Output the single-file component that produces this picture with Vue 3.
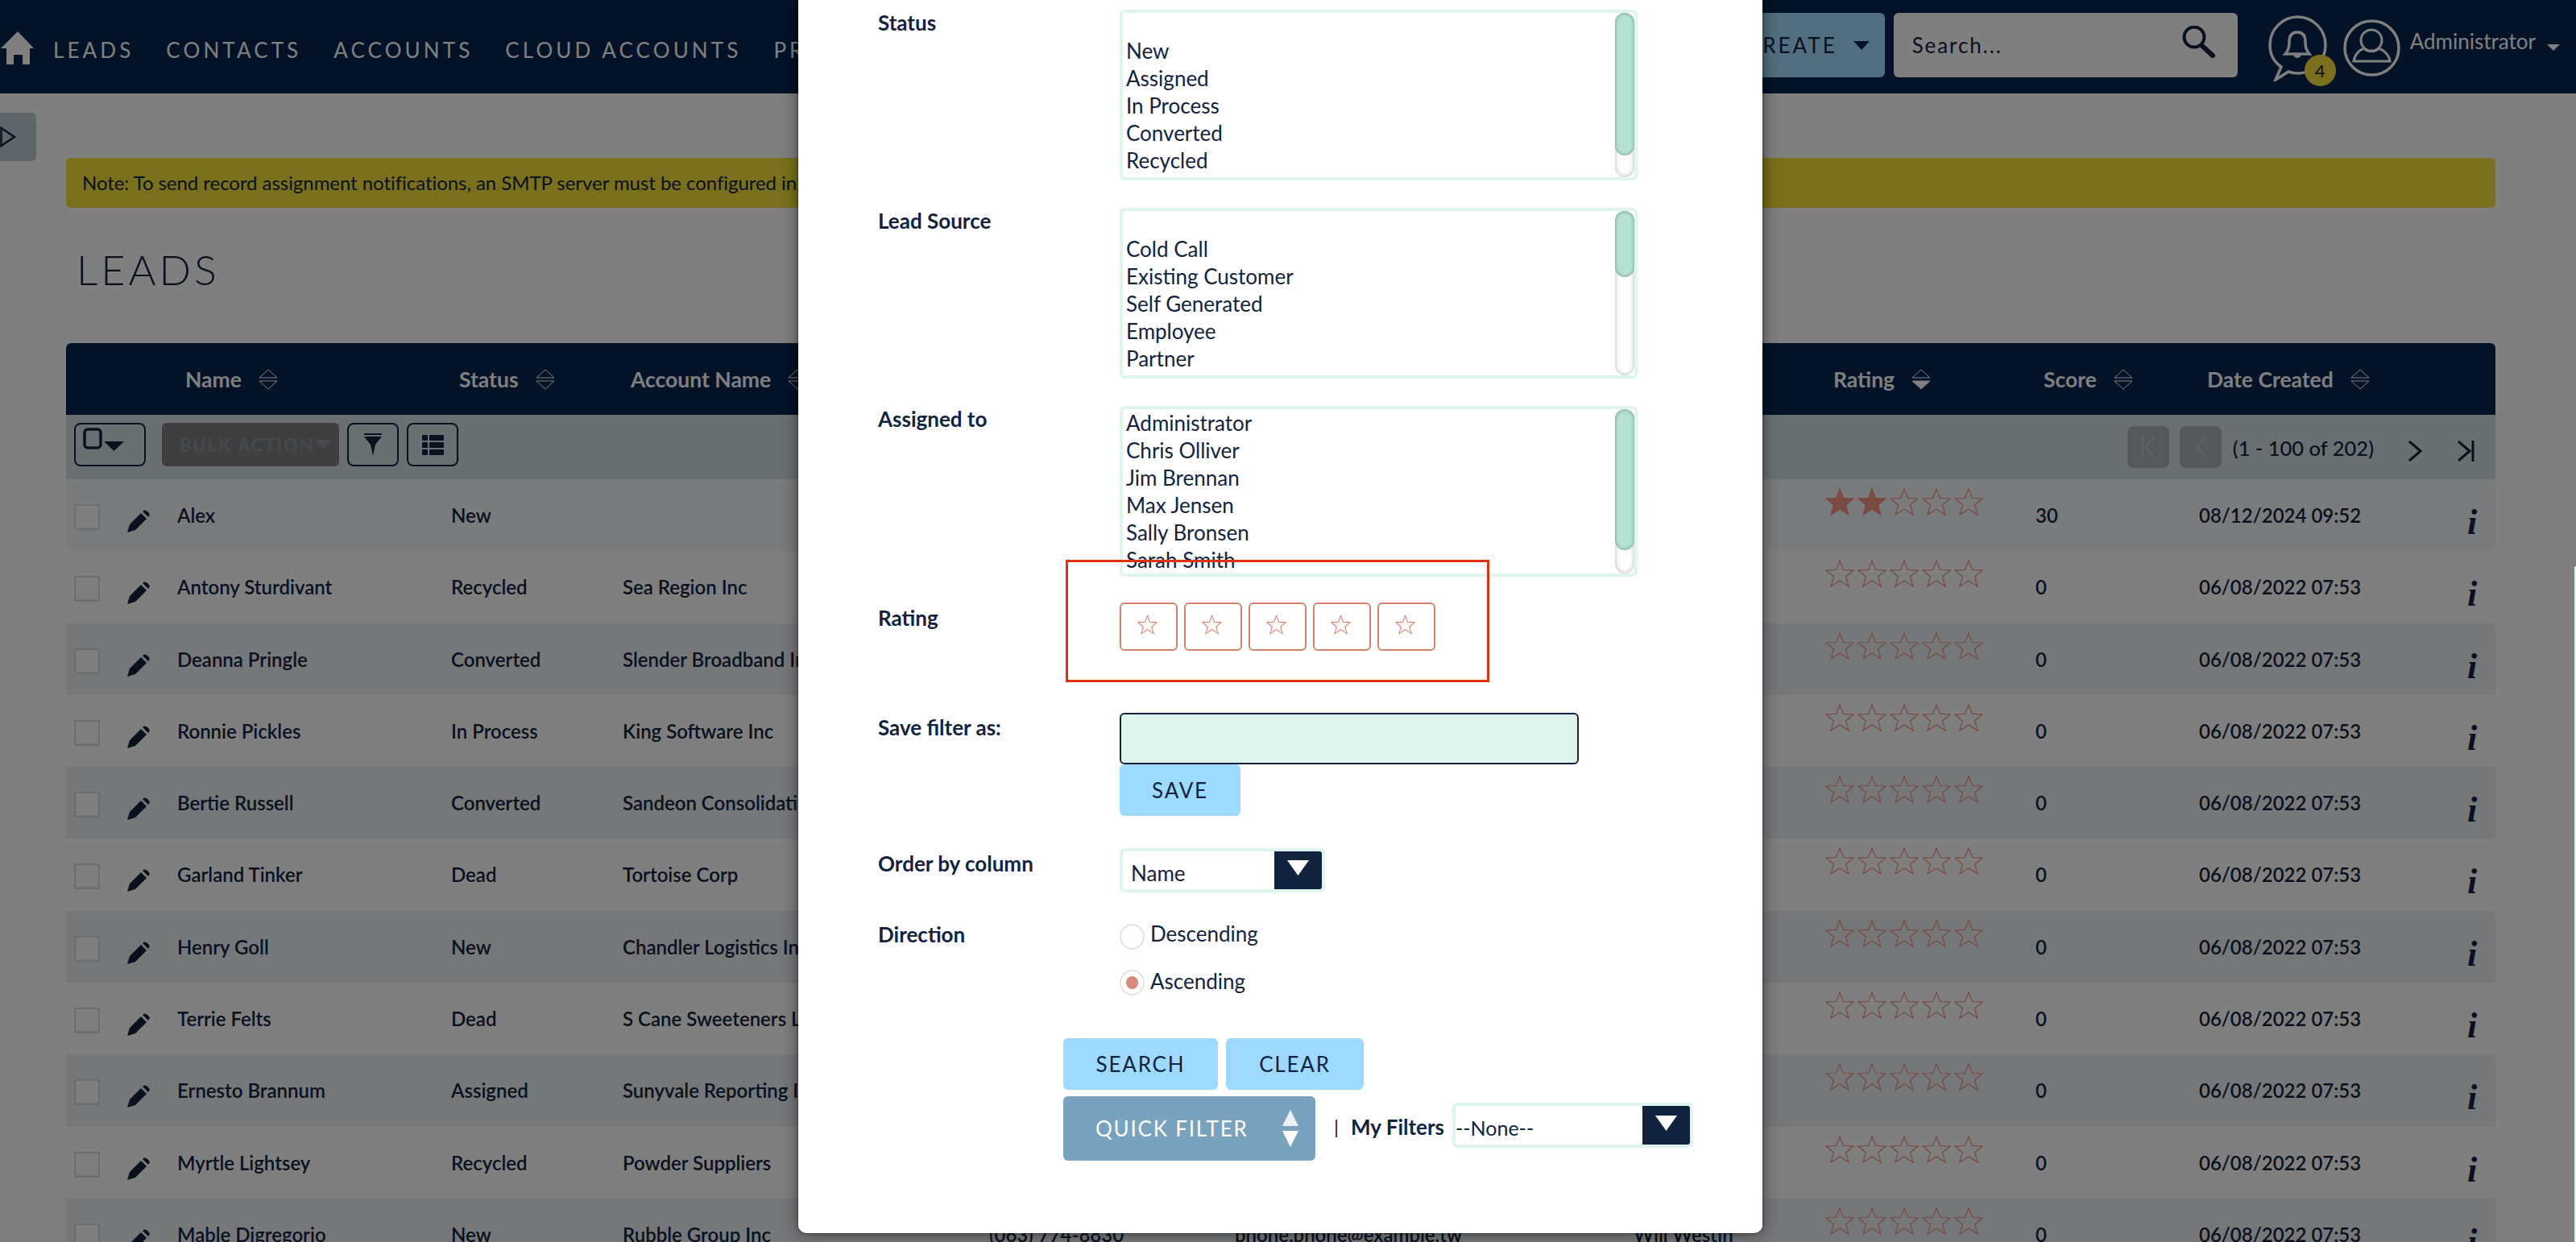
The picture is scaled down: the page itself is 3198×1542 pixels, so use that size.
<template>
  <div class="page">
    <header class="topnav">
      <svg class="home" viewBox="0 0 41 41"><path d="M21 0 L41 21 L36 21 L36 41 L27 41 L27 29 L16 29 L16 41 L7 41 L7 21 L0 21 Z" fill="#fff"/></svg>
      <nav class="menu">
        <a v-for="item in menuItems" :key="item">{{ item }}</a>
      </nav>
      <div class="nav-right">
        <button class="create">CREATE<svg width="20" height="11" viewBox="0 0 20 11"><path d="M0 0H20L10 11Z" fill="#06244e"/></svg></button>
        <div class="global-search">
          <span class="search-hint">Search...</span>
          <svg class="search-icon" width="42" height="40" viewBox="0 0 42 40" fill="none" stroke="#12233f"><circle cx="15" cy="14" r="12.500" stroke-width="4"/><path d="M25 25L38 37" stroke-width="6" stroke-linecap="round"/></svg>
        </div>
        <div class="bell">
          <svg width="74" height="82" viewBox="0 0 74 82" fill="none" stroke="#fff" stroke-width="3.500">
            <path d="M16 64C6 57 2 47 2 37C2 18 17 2 36.500 2C56 2 71 18 71 37C71 56 56 72 36.500 72C32 72 28 71 25 70L9 80Z"/>
            <path d="M36 21C29 21 26 26 26 33C26 40 25 43 21 48L51 48C47 43 46 40 46 33C46 26 43 21 36 21Z"/>
            <path d="M31 48h10a5 5 0 0 1-10 0Z" fill="#fff" stroke="none"/>
          </svg>
          <span class="badge">4</span>
        </div>
        <svg class="avatar" width="71" height="71" viewBox="0 0 71 71" fill="none" stroke="#fff" stroke-width="3">
          <circle cx="35.500" cy="35.500" r="33.500" stroke-width="3.500"/>
          <circle cx="35" cy="26" r="13"/>
          <path d="M13 52L58 52C57 44 50 38 44 36C40 41 30 41 26 36C20 38 14 44 13 52Z"/>
        </svg>
        <span class="user-name">Administrator</span>
        <svg class="user-caret" width="16" height="8" viewBox="0 0 16 8"><path d="M0 0H16L8 8Z" fill="#fff"/></svg>
      </div>
    </header>

    <main class="content">
      <div class="side-toggle">
        <svg width="20" height="26" viewBox="0 0 20 26" fill="none" stroke="#12233f" stroke-width="2.500"><path d="M1.500 2L18 13L1.500 24Z"/></svg>
      </div>
      <div class="alert">Note: To send record assignment notifications, an SMTP server must be configured in Email Settings.</div>
      <h1 class="title">LEADS</h1>

      <section class="list">
        <div class="list-head">
          <div v-for="(col, i) in columns" :key="i" class="head-cell">
            <template v-if="col.name">
              <span>{{ col.name }}</span>
              <svg width="24" height="26" viewBox="0 0 24 26" fill="none" stroke="#fff" stroke-width="1">
                <path d="M12 1L23 11H1Z"/>
                <path d="M1 15H23L12 25Z" :fill="col.sorted ? '#fff' : 'none'"/>
              </svg>
            </template>
          </div>
        </div>

        <div class="toolbar">
          <button class="tool-btn select-btn">
            <svg width="52" height="30" viewBox="0 0 52 30"><rect x="2" y="2" width="20" height="23" rx="4" fill="none" stroke="#12233f" stroke-width="3.500"/><path d="M26 17H51L38.500 29Z" fill="#12233f"/></svg>
          </button>
          <button class="bulk">BULK ACTION<svg width="20" height="12" viewBox="0 0 20 12"><path d="M0 0H20L10 12Z" fill="#8a94a2"/></svg></button>
          <button class="tool-btn icon-btn">
            <svg width="22" height="28" viewBox="0 0 22 28"><path d="M0 0H22V2H0ZM0 4H22L14 14L11 28L8 14Z" fill="#12233f"/></svg>
          </button>
          <button class="tool-btn icon-btn">
            <svg width="27" height="25" viewBox="0 0 27 25" fill="#12233f"><rect width="7" height="7" rx="1"/><rect x="9" width="18" height="7" rx="1"/><rect y="9" width="7" height="7" rx="1"/><rect x="9" y="9" width="18" height="7" rx="1"/><rect y="18" width="7" height="7" rx="1"/><rect x="9" y="18" width="18" height="7" rx="1"/></svg>
          </button>
          <div class="pager">
            <button class="page-btn">
              <svg width="20" height="28" viewBox="0 0 20 28" fill="none" stroke="#bcc4ce" stroke-width="2.500"><path d="M3 1V27M18 1L7 14L18 27"/></svg>
            </button>
            <button class="page-btn">
              <svg width="14" height="28" viewBox="0 0 14 28" fill="none" stroke="#bcc4ce" stroke-width="2.500"><path d="M13 1L2 14L13 27"/></svg>
            </button>
            <span class="page-count">(1 - 100 of 202)</span>
            <svg class="next" width="18" height="26" viewBox="0 0 18 26" fill="none" stroke="#12233f" stroke-width="3"><path d="M2 1L16 13L2 25"/></svg>
            <svg class="last" width="21" height="26" viewBox="0 0 21 26" fill="none" stroke="#12233f" stroke-width="3"><path d="M1 1L15 13L1 25M19 0V26"/></svg>
          </div>
        </div>

        <div v-for="(row, i) in rows" :key="row.name" class="row" :class="{ shaded: i % 2 === 0, active: i === 0 }">
          <span class="check"></span>
          <svg class="pencil" width="29" height="28" viewBox="0 0 29 28" fill="#12233f"><path d="M0 28L3 18L17 4L24 11L10 25ZM19 2L21 .5Q23 0 25 2L27 4Q28.500 6 27 7.500L26 9Z"/></svg>
          <span class="cell">{{ row.name }}</span>
          <span class="cell">{{ row.status }}</span>
          <span class="cell">{{ row.account }}</span>
          <span class="cell">{{ row.phone }}</span>
          <span class="cell">{{ row.email }}</span>
          <span class="cell">{{ row.user }}</span>
          <span class="stars">
            <svg v-for="n in 5" :key="n" width="36" height="34" viewBox="0 0 36 34">
              <path d="M18 1L22.500 12.500L35 13L25.500 21L29 33L18 26L7 33L10.500 21L1 13L13.500 12.500Z" :fill="n <= row.stars ? '#f69480' : 'none'" stroke="#f09080" stroke-width="1.200"/>
            </svg>
          </span>
          <span class="cell">{{ row.score }}</span>
          <span class="cell">{{ row.created }}</span>
          <span class="info">i</span>
        </div>
      </section>
    </main>

    <div class="backdrop"></div>
    <div class="edge-strip"></div>

    <div class="modal">
      <div v-for="box in listBoxes" :key="box.label" class="field list-field">
        <label class="field-label">{{ box.label }}</label>
        <div class="listbox">
          <div class="options">
            <div v-if="box.blank" class="blank"></div>
            <div v-for="opt in box.options" :key="opt" class="option">{{ opt }}</div>
          </div>
          <div class="scroll"><div class="thumb" :style="{ height: box.thumb + 'px' }"></div></div>
        </div>
      </div>

      <div class="field rating-field">
        <label class="field-label">Rating</label>
        <div class="rate-btns">
          <button v-for="n in 5" :key="n" class="rate-btn">
            <svg width="25" height="25" viewBox="0 0 36 34"><path d="M18 1L22.500 12.500L35 13L25.500 21L29 33L18 26L7 33L10.500 21L1 13L13.500 12.500Z" fill="none" stroke="#dd8477" stroke-width="1.600"/></svg>
          </button>
        </div>
        <div class="highlight"></div>
      </div>

      <div class="field save-field">
        <label class="field-label">Save filter as:</label>
        <div>
          <input class="save-input" type="text">
          <button class="blue-btn save-btn">SAVE</button>
        </div>
      </div>

      <div class="field order-field">
        <label class="field-label">Order by column</label>
        <div class="dropdown order-select">
          <span class="dropdown-text">Name</span>
          <span class="dropdown-arrow"><svg width="27" height="19" viewBox="0 0 27 19"><path d="M0 0H27L13.500 19Z" fill="#fff"/></svg></span>
        </div>
      </div>

      <div class="field direction-field">
        <label class="field-label">Direction</label>
        <div class="radios">
          <div class="radio-line"><span class="radio"></span>Descending</div>
          <div class="radio-line"><span class="radio on"></span>Ascending</div>
        </div>
      </div>

      <div class="actions">
        <button class="blue-btn search-btn">SEARCH</button>
        <button class="blue-btn clear-btn">CLEAR</button>
      </div>
      <div class="actions-second">
        <button class="quick">
          <span>QUICK FILTER</span>
          <svg width="20" height="46" viewBox="0 0 20 46" fill="#fff"><path d="M10 0L20 20H0Z" opacity=".85"/><path d="M0 26H20L10 46Z"/></svg>
        </button>
        <span class="sep">|</span>
        <span class="my-filters">My Filters</span>
        <div class="dropdown filter-select">
          <span class="dropdown-text none">--None--</span>
          <span class="dropdown-arrow"><svg width="27" height="19" viewBox="0 0 27 19"><path d="M0 0H27L13.500 19Z" fill="#fff"/></svg></span>
        </div>
      </div>
    </div>
  </div>
</template>

<script setup>
const menuItems = ['LEADS', 'CONTACTS', 'ACCOUNTS', 'CLOUD ACCOUNTS', 'PROJECTS']

const columns = [
  { name: '' }, { name: '' },
  { name: 'Name' },
  { name: 'Status' },
  { name: 'Account Name' },
  { name: '' }, { name: '' }, { name: '' },
  { name: 'Rating', sorted: true },
  { name: 'Score' },
  { name: 'Date Created' },
  { name: '' }
]

const old = { stars: 0, score: '0', created: '06/08/2022 07:53' }

const rows = [
  { name: 'Alex', status: 'New', account: '', stars: 2, score: '30', created: '08/12/2024 09:52' },
  { name: 'Antony Sturdivant', status: 'Recycled', account: 'Sea Region Inc', ...old },
  { name: 'Deanna Pringle', status: 'Converted', account: 'Slender Broadband Inc', ...old },
  { name: 'Ronnie Pickles', status: 'In Process', account: 'King Software Inc', ...old },
  { name: 'Bertie Russell', status: 'Converted', account: 'Sandeon Consolidation Corp', ...old },
  { name: 'Garland Tinker', status: 'Dead', account: 'Tortoise Corp', ...old },
  { name: 'Henry Goll', status: 'New', account: 'Chandler Logistics Inc', ...old },
  { name: 'Terrie Felts', status: 'Dead', account: 'S Cane Sweeteners Ltd', ...old },
  { name: 'Ernesto Brannum', status: 'Assigned', account: 'Sunyvale Reporting Inc', ...old },
  { name: 'Myrtle Lightsey', status: 'Recycled', account: 'Powder Suppliers', ...old },
  { name: 'Mable Digregorio', status: 'New', account: 'Rubble Group Inc', phone: '(063) 774-8830', email: 'phone.phone@example.tw', user: 'Will Westin', ...old }
]

const listBoxes = [
  { label: 'Status', blank: true, thumb: 177, options: ['New', 'Assigned', 'In Process', 'Converted', 'Recycled'] },
  { label: 'Lead Source', blank: true, thumb: 82, options: ['Cold Call', 'Existing Customer', 'Self Generated', 'Employee', 'Partner'] },
  { label: 'Assigned to', blank: false, thumb: 175, options: ['Administrator', 'Chris Olliver', 'Jim Brennan', 'Max Jensen', 'Sally Bronsen', 'Sarah Smith'] }
]
</script>

<style>
html, body {
  margin: 0;
  background: #fff;
}
</style>

<style scoped>
.page {
  position: relative;
  width: 3198px;
  height: 1542px;
  overflow: hidden;
  background: #fff;
  color: #12233f;
  font-family: Lato, "Liberation Sans", sans-serif;
  font-size: 24px;
}

button {
  font-family: inherit;
  border: none;
  padding: 0;
}

.topnav {
  display: flex;
  align-items: center;
  height: 116px;
  background: #06244e;
  color: #fff;
}

.home {
  width: 41px;
  height: 41px;
  margin-left: 1px;
  margin-top: 3px;
}

.menu {
  display: flex;
  gap: 40px;
  margin-left: 24px;
  font-size: 26px;
  letter-spacing: 4.1px;
  white-space: nowrap;
  margin-top: 8px;
}

.nav-right {
  display: flex;
  align-items: center;
  margin-left: auto;
  padding-right: 20px;
}

.create {
  display: flex;
  align-items: center;
  justify-content: flex-end;
  gap: 20px;
  width: 210px;
  height: 80px;
  padding-right: 19px;
  margin-top: -4px;
  background: #a4dfff;
  color: #12233f;
  font-size: 26px;
  letter-spacing: 3px;
  border-radius: 6px;
}

.global-search {
  display: flex;
  align-items: center;
  justify-content: space-between;
  width: 427px;
  height: 80px;
  margin-left: 11px;
  margin-top: -4px;
  padding: 0 27px 0 23px;
  box-sizing: border-box;
  background: #fff;
  border-radius: 6px;
  color: #12233f;
  font-size: 26px;
  letter-spacing: 1.9px;
}

.search-icon {
  margin-top: -9px;
}

.bell {
  position: relative;
  width: 84px;
  height: 89px;
  margin-left: 38px;
  margin-top: 11px;
}

.badge {
  position: absolute;
  left: 45px;
  top: 49px;
  width: 39px;
  height: 39px;
  border-radius: 50%;
  background: #f4de38;
  color: #12233f;
  font-size: 22px;
  line-height: 39px;
  text-align: center;
}

.avatar {
  margin-left: 9px;
  margin-top: 2px;
}

.user-name {
  margin-left: 12px;
  margin-top: -14px;
  font-size: 26px;
}

.user-caret {
  margin-left: 14px;
  margin-top: 2px;
}

.content {
  padding: 0 100px 0 82px;
}

.side-toggle {
  display: flex;
  align-items: center;
  justify-content: flex-start;
  width: 45px;
  height: 60px;
  margin: 24px 0 -4px -82px;
  background: #bfccd2;
  border-radius: 0 6px 6px 0;
}

.alert {
  height: 62px;
  padding-left: 20px;
  line-height: 62px;
  background: #f4de38;
  border-radius: 6px;
  white-space: nowrap;
  overflow: hidden;
  font-size: 24px;
  letter-spacing: -0.05px;
}

.title {
  height: 60px;
  margin: 46px 0 62px 13px;
  font-size: 52px;
  font-weight: 300;
  line-height: 60px;
  letter-spacing: 4px;
}

.list-head,
.row {
  display: grid;
  grid-template-columns: 67px 61px 340px 213px 455px 305px 495px 238px 261px 203px 333px 45px;
}

.list-head {
  height: 89px;
  align-items: center;
  background: #06244e;
  color: #fff;
  border-radius: 6px 6px 0 0;
  font-size: 26.5px;
  font-weight: 700;
}

.head-cell {
  display: flex;
  align-items: center;
  gap: 21px;
  padding-left: 20px;
  white-space: nowrap;
}

.toolbar {
  display: flex;
  align-items: flex-start;
  height: 80px;
  padding: 10px 26px 0 10px;
  box-sizing: border-box;
  background: #d4e0e2;
}

.tool-btn {
  display: flex;
  align-items: center;
  justify-content: center;
  height: 54px;
  box-sizing: border-box;
  background: transparent;
  border: 2px solid #12233f;
  border-radius: 8px;
}

.select-btn {
  justify-content: flex-start;
  width: 89px;
  padding-left: 9px;
}

.select-btn svg {
  margin-top: -12px;
}

.bulk {
  display: flex;
  align-items: center;
  width: 220px;
  height: 54px;
  margin: 0 10px 0 20px;
  padding-left: 22px;
  background: #7f7f7f;
  border-radius: 6px;
  color: #8a94a2;
  font-size: 22px;
  font-weight: 700;
  letter-spacing: 2px;
  white-space: nowrap;
}

.icon-btn {
  width: 64px;
  margin-right: 10px;
}

.pager {
  display: flex;
  align-items: flex-start;
  margin-left: auto;
}

.page-btn {
  display: flex;
  align-items: center;
  justify-content: center;
  width: 52px;
  height: 52px;
  margin-top: 4px;
  margin-right: 13px;
  background: #adb3b8;
  border-radius: 8px;
}

.page-count {
  margin-left: 1px;
  margin-top: 13px;
  font-size: 25.5px;
  line-height: 36px;
  font-weight: 500;
}

.next {
  margin-left: 42px;
  margin-top: 22px;
}

.last {
  margin-left: 44px;
  margin-top: 22px;
}

.row {
  height: 89.3px;
  overflow: hidden;
  background: #fff;
  font-weight: 600;
}

.row.shaded {
  background: #eceff3;
}

.row.active {
  background: #f5f7f9;
}

.check {
  width: 32px;
  height: 32px;
  margin: 31px 0 0 10px;
  box-sizing: border-box;
  background: #fff;
  border: 2px solid #d5dde0;
  border-radius: 2px;
  box-shadow: inset 0 -1px 2px rgba(0, 0, 0, 0.1);
}

.pencil {
  margin: 38px 0 0 9px;
}

.cell {
  padding: 29px 0 0 10px;
  line-height: 32px;
  white-space: nowrap;
}

.stars {
  display: flex;
  gap: 4px;
  padding: 11px 0 0 10px;
}

.info {
  padding: 29px 0 0 10px;
  font-family: "Liberation Serif", serif;
  font-size: 44px;
  font-style: italic;
  font-weight: 700;
  line-height: 50px;
}

.backdrop {
  position: absolute;
  inset: 0;
  background: rgba(0, 0, 0, 0.5);
}

.edge-strip {
  position: absolute;
  right: 0;
  top: 703px;
  bottom: 0;
  width: 2px;
  background: #e0f5ee;
  border-radius: 2px 0 0 0;
}

.modal {
  position: absolute;
  left: 991px;
  top: 0;
  width: 1197px;
  height: 1531px;
  padding: 12px 0 0 99px;
  box-sizing: border-box;
  background: #fff;
  border-radius: 0 0 10px 10px;
  box-shadow: 0 0 3px rgba(0, 0, 0, 0.6), 0 0 20px rgba(0, 0, 0, 0.5);
}

.field {
  position: relative;
  display: flex;
}

.field-label {
  flex: none;
  width: 300px;
  font-size: 26px;
  font-weight: 700;
  line-height: 32px;
}

.list-field {
  height: 212px;
  margin-bottom: 34px;
}

.listbox {
  display: flex;
  width: 643px;
  height: 212px;
  box-sizing: border-box;
  overflow: hidden;
  border: 4px solid #e0f5ee;
  border-radius: 6px;
  font-size: 26px;
}

.options {
  flex: 1;
  padding-left: 4px;
  overflow: hidden;
}

.blank {
  height: 30px;
}

.option {
  height: 34px;
  line-height: 34px;
}

.scroll {
  flex: none;
  width: 24px;
  border-radius: 12px;
  background: #fff;
  box-shadow: inset 0 0 6px rgba(0, 0, 0, 0.3);
}

.thumb {
  border-radius: 12px;
  background: #b4e3d1;
  box-shadow: inset 0 0 5px rgba(0, 0, 0, 0.35);
}

.rating-field {
  height: 60px;
  margin-top: -2px;
}

.rating-field .field-label {
  padding-top: 3px;
}

.rate-btns {
  display: flex;
  gap: 8px;
}

.rate-btn {
  display: flex;
  justify-content: center;
  width: 72px;
  height: 60px;
  padding: 13px 4px 0 0;
  box-sizing: border-box;
  background: #fff;
  border: 2px solid #d8816f;
  border-radius: 6px;
}

.highlight {
  position: absolute;
  left: 233px;
  top: -53px;
  width: 526px;
  height: 152px;
  box-sizing: border-box;
  border: 3px solid #e0320e;
}

.save-field {
  margin-top: 77px;
}

.save-field .field-label {
  padding-top: 2px;
}

.save-input {
  display: block;
  width: 570px;
  height: 64px;
  box-sizing: border-box;
  background: #e0f4ed;
  border: 2px solid #12233f;
  border-radius: 6px;
}

.blue-btn {
  height: 64px;
  background: #9ed9ff;
  border-radius: 6px;
  color: #12233f;
  font-size: 26px;
  letter-spacing: 1.8px;
}

.save-btn {
  display: block;
  width: 150px;
}

.order-field {
  margin-top: 40px;
}

.order-field .field-label {
  padding-top: 3px;
}

.dropdown {
  display: flex;
  box-sizing: border-box;
  border: 4px solid #e0f5ee;
  border-radius: 6px;
}

.dropdown-text {
  flex: 1;
  padding: 10px 0 0 10px;
  font-size: 26px;
  line-height: 34px;
}

.dropdown-text.none {
  padding: 10px 0 0 0;
  font-size: 25px;
}

.dropdown-arrow {
  display: flex;
  align-items: center;
  justify-content: center;
  flex: none;
  width: 59px;
  background: #12233f;
  border-radius: 0 3px 3px 0;
}

.dropdown-arrow svg {
  margin-top: -6px;
}

.order-select {
  width: 255px;
  height: 55px;
}

.direction-field {
  margin-top: 39px;
}

.direction-field .field-label {
  line-height: 26px;
}

.radios {
  display: flex;
  flex-direction: column;
  gap: 25px;
}

.radio-line {
  display: flex;
  align-items: flex-start;
  gap: 7px;
  height: 32px;
  font-size: 26px;
  line-height: 24px;
}

.radio-line:last-child {
  line-height: 28px;
}

.radio {
  position: relative;
  width: 31px;
  height: 32px;
  box-sizing: border-box;
  border: 2px solid #e0e4e8;
  border-radius: 50%;
  background: #fff;
}

.radio.on::after {
  content: "";
  position: absolute;
  left: 6px;
  top: 6px;
  width: 15px;
  height: 16px;
  border-radius: 50%;
  background: #d98a7a;
}

.actions {
  display: flex;
  gap: 10px;
  margin: 53px 0 0 230px;
}

.search-btn {
  width: 192px;
}

.clear-btn {
  width: 171px;
}

.actions-second {
  display: flex;
  align-items: flex-start;
  margin: 8px 0 0 230px;
}

.quick {
  display: flex;
  align-items: center;
  justify-content: space-between;
  width: 313px;
  height: 80px;
  padding: 0 21px 0 40px;
  box-sizing: border-box;
  background: #78a2bd;
  border-radius: 6px;
  color: #fff;
  font-size: 26px;
  letter-spacing: 1.8px;
}

.sep {
  margin: 22px 0 0 23px;
  line-height: 32px;
}

.my-filters {
  margin: 22px 0 0 15px;
  font-size: 26px;
  line-height: 32px;
  font-weight: 700;
  white-space: nowrap;
}

.filter-select {
  width: 299px;
  height: 56px;
  margin: 8px 0 0 10px;
}
</style>
